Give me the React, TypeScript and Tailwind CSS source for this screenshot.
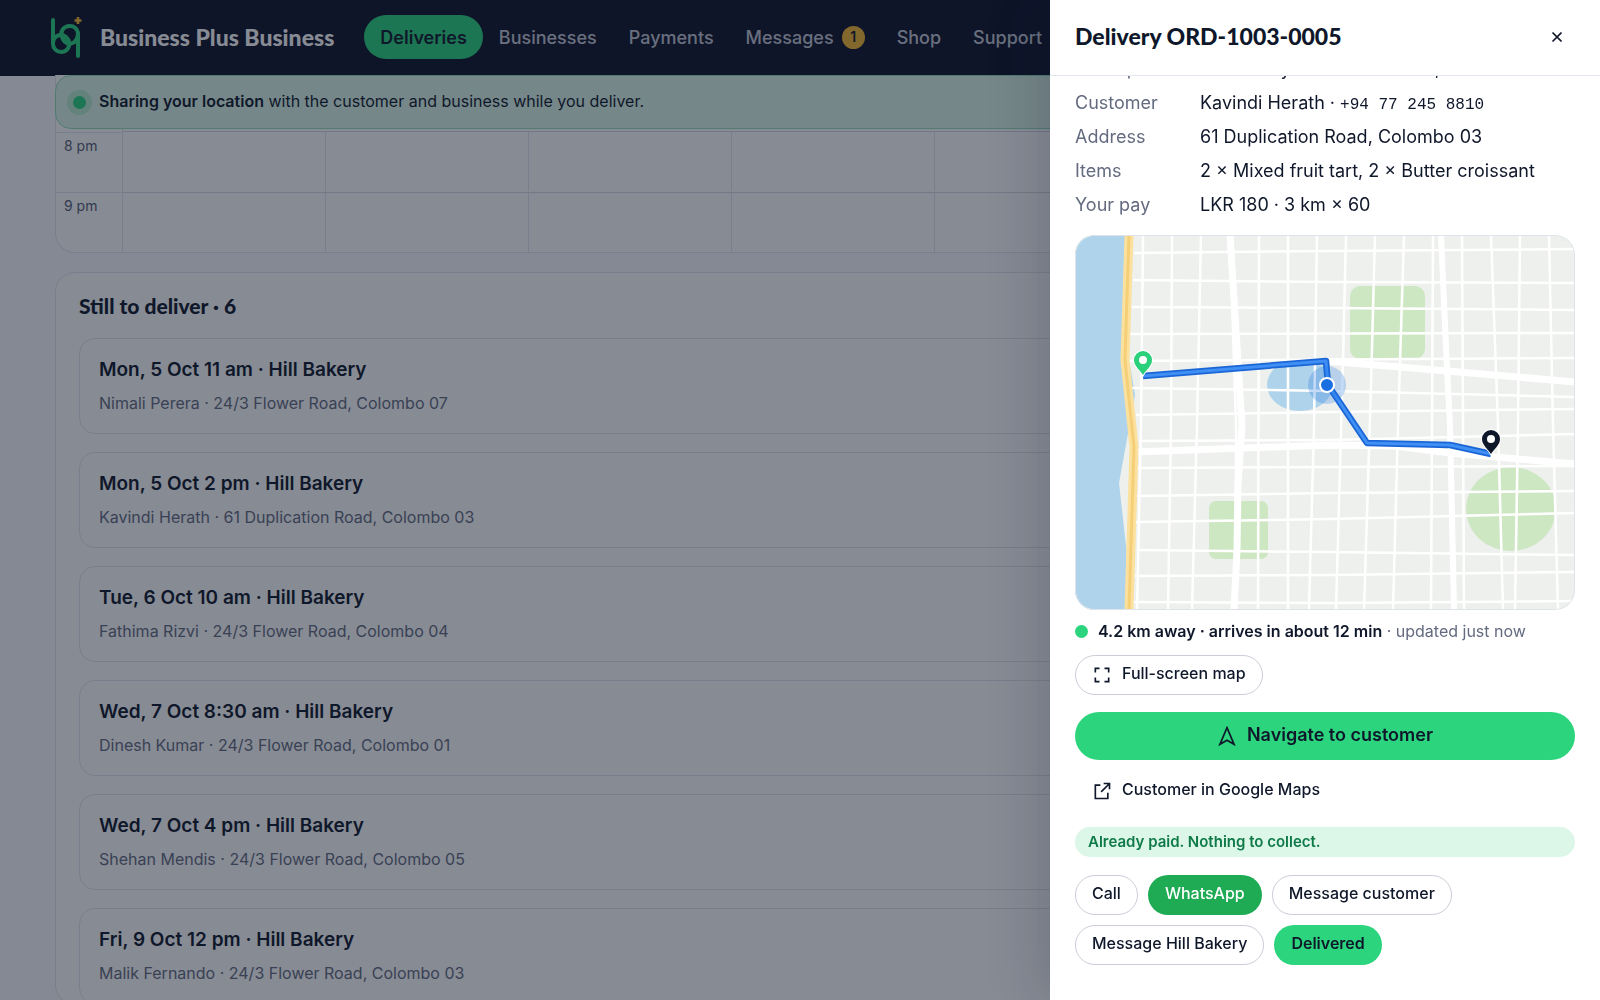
import type { ReactNode } from "react";

const navLinks: Array<{ label: string; badge?: number; active?: boolean }> = [
  { label: "Deliveries", active: true },
  { label: "Businesses" },
  { label: "Payments" },
  { label: "Messages", badge: 1 },
  { label: "Shop" },
  { label: "Support" }
];

const deliveries = [
  { title: "Mon, 5 Oct 11 am · Hill Bakery", text: "Nimali Perera · 24/3 Flower Road, Colombo 07" },
  { title: "Mon, 5 Oct 2 pm · Hill Bakery", text: "Kavindi Herath · 61 Duplication Road, Colombo 03" },
  { title: "Tue, 6 Oct 10 am · Hill Bakery", text: "Fathima Rizvi · 24/3 Flower Road, Colombo 04" },
  { title: "Wed, 7 Oct 8:30 am · Hill Bakery", text: "Dinesh Kumar · 24/3 Flower Road, Colombo 01" },
  { title: "Wed, 7 Oct 4 pm · Hill Bakery", text: "Shehan Mendis · 24/3 Flower Road, Colombo 05" },
  { title: "Fri, 9 Oct 12 pm · Hill Bakery", text: "Malik Fernando · 24/3 Flower Road, Colombo 03" }
];

const details: Array<{ label: string; value: ReactNode }> = [
  { label: "Pick up", value: "Hill Bakery · 12 Flower Road, Colombo 07" },
  {
    label: "Customer",
    value: (
      <>
        Kavindi Herath · <span className="font-['Liberation_Mono',monospace] text-base leading-none">+94 77 245 8810</span>
      </>
    )
  },
  { label: "Address", value: "61 Duplication Road, Colombo 03" },
  { label: "Items", value: "2 × Mixed fruit tart, 2 × Butter croissant" },
  { label: "Your pay", value: "LKR 180 · 3 km × 60" }
];

const streets = [
  // north to south
  "M68 0L66 190L62 375",
  "M97 0L96 190L93 375",
  "M126 0L122 190L117 375",
  "M155 0L161 190L161 375",
  "M184 0L183 375",
  "M213 0L213 375",
  "M242 0L239 190L234 375",
  "M271 0L268 125L261 375",
  "M300 0L296 150L289 375",
  "M329 0L323 190L318 375",
  "M358 0L356 375",
  "M387 0L389 375",
  "M416 0L423 190L428 375",
  "M445 0L443 190L440 375",
  "M474 0L478 190L483 375",
  // west to east
  "M59 18L255 16L500 14",
  "M58 45L255 47L500 48",
  "M57 72L255 73L500 75",
  "M55 99L500 98",
  "M54 126L500 123",
  "M57 153L255 156L500 162",
  "M61 180L255 177L500 174",
  "M64 206L255 205L500 199",
  "M62 233L255 232L500 231",
  "M60 261L255 258L500 256",
  "M60 287L255 284L500 278",
  "M62 315L255 317L500 320",
  "M60 341L255 340L500 337",
  "M58 367L255 368L500 366"
];

const outlineButton =
  "inline-flex h-10 items-center rounded-full border border-[#cbced8] bg-white px-4 pb-1 text-base font-medium text-[#0f172a]";

function Logo() {
  return (
    <svg width="32" height="44" viewBox="0 0 32 44" fill="none" aria-hidden="true">
      <g stroke="#2bd47d" strokeWidth="4" strokeLinecap="round">
        <path d="M3 5v24a8 8 0 0 0 8 8c6 0 9-5 8-10-1-4-4-6-7-7" />
        <path d="M28 41V18a8 8 0 0 0-8-7c-7 0-10 6-8 11 1 4 4 6 7 7" />
        <path d="M3 28c0-4 3-8 8-8M28 18c0 6-3 10-8 11" />
      </g>
      <path d="M28 2v7M24.500 5.500h7" stroke="#f5b82e" strokeWidth="2.600" />
    </svg>
  );
}

function Pin({ x, y, color }: { x: number; y: number; color: string }) {
  return (
    <g transform={`translate(${x} ${y})`}>
      <path
        d="M0 0C-3-5-9-9-9-15A9 9 0 0 1 9-15C9-9 3-5 0 0Z"
        fill={color}
        stroke="white"
        strokeWidth="2"
        paintOrder="stroke"
      />
      <circle cy="-15" r="4" fill="white" />
    </g>
  );
}

function RouteMap() {
  const route = "M68 141L251 126L253 150L292 208L375 210L416 219";

  return (
    <svg
      viewBox="0 0 500 375"
      className="block w-full rounded-[20px] bg-[#edf0ec]"
      role="img"
      aria-label="Route from Hill Bakery to the customer"
    >
      <path d="M0 0H58L50 100L60 160L44 248L52 320L50 375H0Z" fill="#aed3ea" />
      <g fill="#cee7c3">
        <rect x="275" y="51" width="75" height="73" rx="10" />
        <rect x="134" y="266" width="59" height="58" rx="7" />
        <ellipse cx="436" cy="274" rx="45" ry="42" />
      </g>
      <ellipse cx="225" cy="150" rx="33" ry="26" fill="#aed3ea" />
      <g fill="none" stroke="white">
        {streets.map((d) => (
          <path key={d} d={d} strokeWidth="2.500" />
        ))}
        <path d="M155 0L160 80L167 190L163 250L162 315L159 375" strokeWidth="7" />
        <path d="M366 0L372 133L375 190L379 375" strokeWidth="6" />
        <path d="M251 126L325 132L500 147" strokeWidth="7" />
        <path d="M60 217L255 210L320 211L375 218L500 229" strokeWidth="7" />
      </g>
      <g fill="none" strokeLinejoin="round">
        <path d="M54 0L50 125L59 212L54 375" stroke="#fbe19d" strokeWidth="9" />
        <path d="M54 0L50 125L59 212L54 375" stroke="#f5cf78" strokeWidth="3" />
      </g>
      <g fill="none" strokeLinejoin="round">
        <path d={route} stroke="#1b66d6" strokeWidth="6.500" />
        <path d={route} stroke="#3f8ff5" strokeWidth="3" />
      </g>
      <circle cx="252" cy="150" r="19" fill="#1a6fe0" fillOpacity="0.25" />
      <circle cx="252" cy="150" r="7" fill="#1a6fe0" stroke="white" strokeWidth="2" />
      <Pin x={68} y={140} color="#2bd07b" />
      <Pin x={416} y={219} color="#0f172a" />
      <rect x="0.500" y="0.500" width="499" height="374" rx="19.500" fill="none" stroke="#dfe3ea" />
    </svg>
  );
}

function Header() {
  return (
    <header className="flex h-[76px] items-center border-b border-[#0d1228] bg-[#0d1228] pb-px pl-[50px]">
      <a href="#home" className="flex items-center gap-[18px] font-['Lato',sans-serif] text-[23px] font-black whitespace-nowrap text-white">
        <Logo />
        Business Plus Business
      </a>
      <nav className="ml-[30px] flex text-[18px] font-medium whitespace-nowrap">
        {navLinks.map(({ label, badge, active }) => (
          <a
            key={label}
            href={`#${label.toLowerCase()}`}
            className={
              active
                ? "flex h-11 items-center rounded-full bg-[#2bd47d] px-4 font-semibold text-[#0f172a]"
                : "flex h-11 items-center gap-2 px-4 text-[#c3c7d2]"
            }
          >
            {label}
            {badge ? (
              <span className="flex size-[23px] items-center justify-center rounded-full bg-[#f5b82e] text-sm font-semibold text-[#0f172a]">
                {badge}
              </span>
            ) : null}
          </a>
        ))}
      </nav>
    </header>
  );
}

function Calendar() {
  return (
    <section aria-label="Calendar" className="-mt-[54px] flex overflow-hidden rounded-b-[20px] border border-t-0 border-[#e2e5ee] bg-white">
      <div className="w-[67px] shrink-0 border-r border-[#e2e5ee] pt-[57px] text-sm text-[#565d73]">
        {["8 pm", "9 pm"].map((hour) => (
          <div key={hour} className="h-[60px] border-t border-[#e2e5ee] px-2 pt-[3px]">
            {hour}
          </div>
        ))}
      </div>
      <div className="grid flex-1 grid-cols-7 pt-14">
        {Array.from({ length: 14 }, (_, cell) => (
          <div key={cell} className="h-[60px] border-t border-r border-t-[#d5d9e2] border-r-[#e2e5ee]" />
        ))}
      </div>
    </section>
  );
}

function DeliveryDrawer() {
  return (
    <aside
      role="dialog"
      aria-label="Delivery ORD-1003-0005"
      className="fixed inset-y-0 right-0 flex w-[550px] max-w-full flex-col bg-white text-[#0f172a] shadow-[-10px_0_50px_rgba(15,23,42,0.18)]"
    >
      <div className="z-10 flex h-[76px] shrink-0 items-center justify-between border-b border-[#e5e7ee] bg-white pr-[33px] pb-0.5 pl-[25px]">
        <h2 className="font-['Lato',sans-serif] text-[23px] font-black">Delivery ORD-1003-0005</h2>
        <button type="button" aria-label="Close" className="flex size-5 items-center justify-center">
          <svg width="12" height="12" viewBox="0 0 12 12" stroke="currentColor" strokeWidth="1.700" aria-hidden="true">
            <path d="M1.500 1.500l9 9M10.500 1.500l-9 9" />
          </svg>
        </button>
      </div>
      <div className="-mt-[21px] px-[25px]">
        <dl className="grid grid-cols-[125px_1fr] gap-y-1.5 text-[18px] leading-7">
          {details.map(({ label, value }) => (
            <div key={label} className="contents">
              <dt className="text-[#646b80]">{label}</dt>
              <dd className="whitespace-nowrap">{value}</dd>
            </div>
          ))}
        </dl>
        <div className="mt-4">
          <RouteMap />
        </div>
        <p className="mt-2 flex h-[26px] items-center gap-[10px] text-base">
          <span className="size-[13px] rounded-full bg-[#2bd47d]" />
          <span className="text-[#646b80]">
            <strong className="font-semibold text-[#0f172a]">4.2 km away · arrives in about 12 min</strong> · updated just now
          </span>
        </p>
        <button type="button" className={`${outlineButton} mt-[11px] gap-[10px]`}>
          <svg width="20" height="20" viewBox="0 0 24 24" fill="none" stroke="currentColor" strokeWidth="2" className="relative top-0.5" aria-hidden="true">
            <path d="M4 9V4h5M15 4h5v5M20 15v5h-5M9 20H4v-5" />
          </svg>
          Full-screen map
        </button>
        <a
          href="#navigate"
          className="mt-[17px] flex h-12 items-center justify-center gap-[10px] rounded-full bg-[#2bd47d] pb-1 text-[18px] font-semibold"
        >
          <svg width="20" height="20" viewBox="0 0 24 24" fill="none" stroke="currentColor" strokeWidth="2" className="relative top-0.5" aria-hidden="true">
            <path d="M12 2L20.500 22L12 17L3.500 22Z" />
          </svg>
          Navigate to customer
        </a>
        <a href="#maps" className="mt-[9px] flex h-10 items-center gap-[10px] px-[17px] text-base font-medium">
          <svg width="20" height="20" viewBox="0 0 24 24" fill="none" stroke="currentColor" strokeWidth="2" className="relative top-0.5" aria-hidden="true">
            <path d="M14 3h7v7M21 3L11 13M10 5H4v16h15v-7" />
          </svg>
          Customer in Google Maps
        </a>
        <p className="mt-[18px] flex h-[30px] items-center rounded-full bg-[#dcf6e8] px-[13px] text-[15px] font-semibold text-[#0f7a48]">
          Already paid. Nothing to collect.
        </p>
        <div className="mt-[18px] flex flex-wrap gap-[10px]">
          <button type="button" className={outlineButton}>Call</button>
          <button type="button" className="inline-flex h-10 items-center rounded-full bg-[#1fab54] px-[17px] pb-1 text-base font-medium text-white">
            WhatsApp
          </button>
          <button type="button" className={outlineButton}>Message customer</button>
          <button type="button" className={outlineButton}>Message Hill Bakery</button>
          <button type="button" className="inline-flex h-10 items-center rounded-full bg-[#2bd47d] px-[17px] pb-1 text-base font-semibold">
            Delivered
          </button>
        </div>
      </div>
    </aside>
  );
}

export default function App() {
  return (
    <div className="h-screen overflow-hidden bg-[#f9fafc] font-['Inter',sans-serif] text-[#0f172a]">
      <Header />
      <main className="mx-auto -mt-px px-[55px]">
        <div className="relative z-10 flex h-[54px] items-center gap-[7px] rounded-[16px] border border-[#8fe0b8] bg-[#dcf7e8] px-[11px] text-base">
          <span className="flex size-[25px] items-center justify-center rounded-full bg-[#b4eccd]">
            <span className="size-[13px] rounded-full bg-[#2bd47d]" />
          </span>
          <p className="pb-0.5">
            <strong className="font-semibold">Sharing your location</strong> with the customer and business while you deliver.
          </p>
        </div>
        <Calendar />
        <section className="mt-[19px] rounded-[20px] border border-[#e2e5ee] bg-white px-[23px] pt-[19px]">
          <h2 className="font-['Lato',sans-serif] text-[21px] leading-7 font-black">Still to deliver · 6</h2>
          <ul className="mt-[18px] flex flex-col gap-[18px]">
            {deliveries.map(({ title, text }) => (
              <li key={title} className="rounded-[16px] border border-[#e2e5ee] px-[19px] py-[17px]">
                <h3 className="text-[19px] leading-7 font-semibold">{title}</h3>
                <p className="mt-1.5 text-base leading-[26px] text-[#646b80]">{text}</p>
              </li>
            ))}
          </ul>
        </section>
      </main>
      <div className="fixed inset-0 z-20 bg-[#0f172a]/50" />
      <div className="relative z-30">
        <DeliveryDrawer />
      </div>
    </div>
  );
}
